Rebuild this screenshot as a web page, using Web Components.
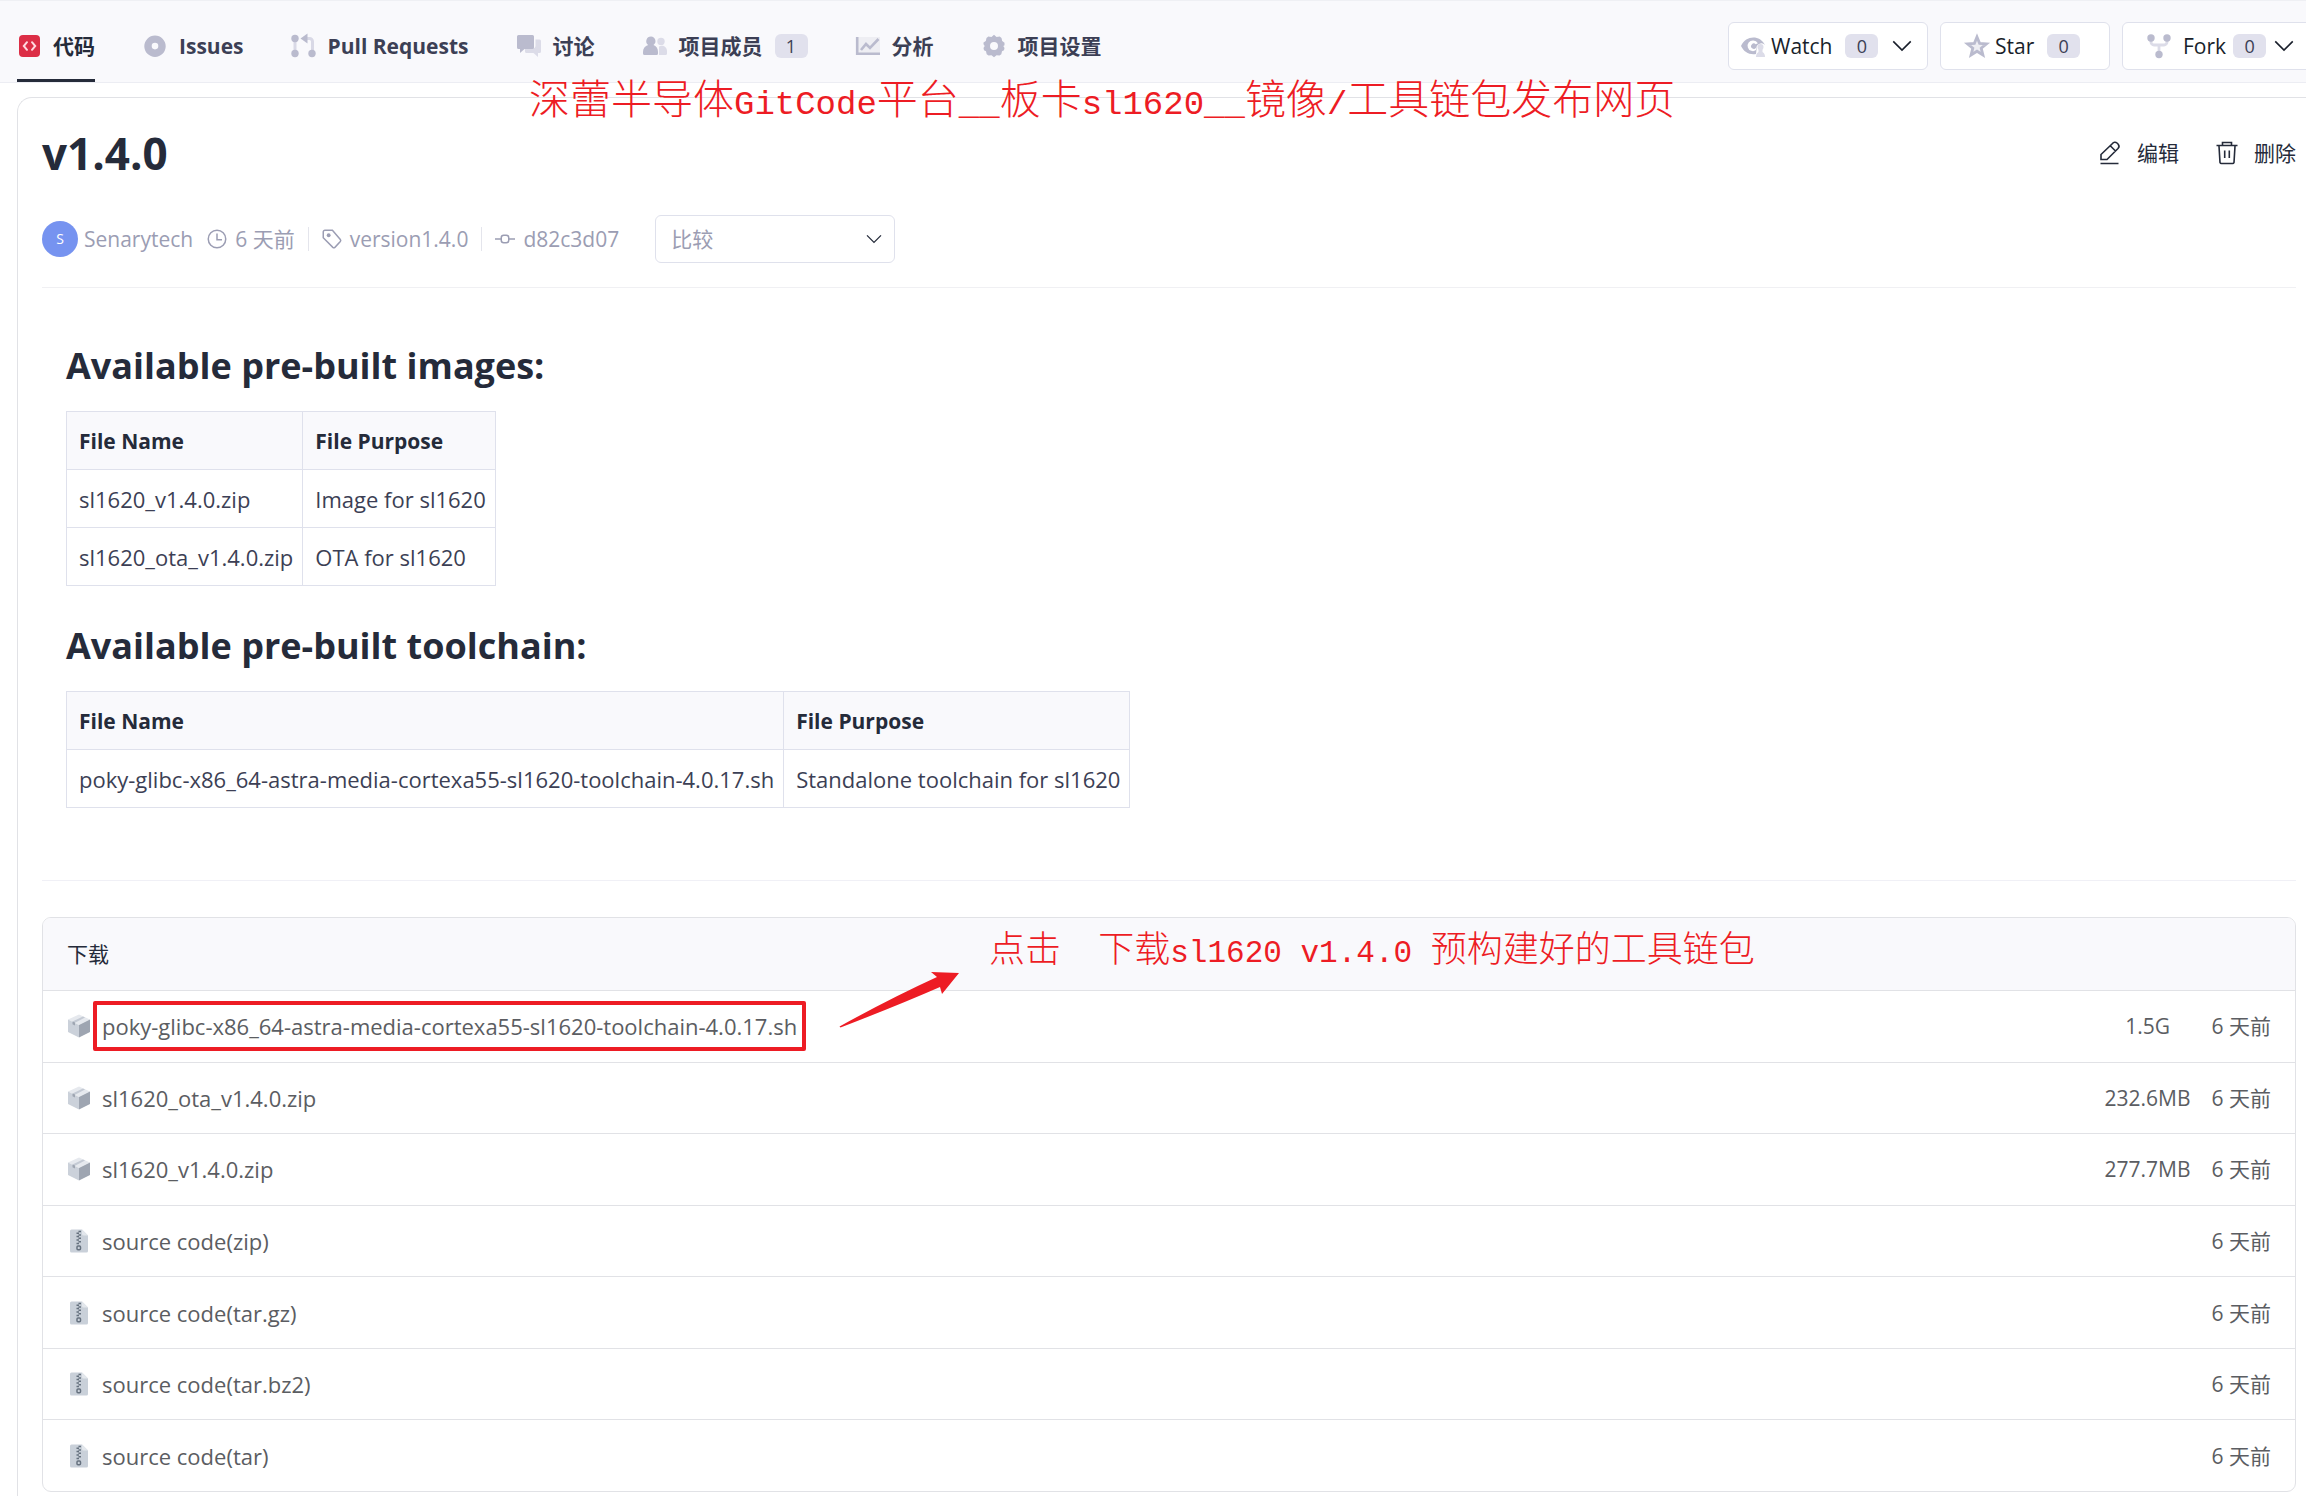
<!DOCTYPE html>
<html lang="zh-CN">
<head>
<meta charset="utf-8">
<title>v1.4.0</title>
<style>
html,body{margin:0;padding:0;background:#fff}
body{font:21px/30px "Open Sans","Noto Sans CJK SC",sans-serif;color:#252b3a;overflow:hidden}
</style>
</head>
<body>
<release-page></release-page>
<script>
const ICONS={
code:'<rect x="2" y="1" width="21" height="22" rx="4" fill="#dc2e46"/><path d="M10 8.200l-3.200 3.800 3.200 3.800M15 8.200l3.200 3.800-3.200 3.800" fill="none" stroke="#ffd9df" stroke-width="2" stroke-linecap="round"/>',
issue:'<path fill-rule="evenodd" d="M12 1.500a10.700 10.700 0 1 0 0 21.400a10.700 10.700 0 1 0 0-21.400zm0 7.300a3.300 3.300 0 1 1 0 6.600a3.300 3.300 0 1 1 0-6.600z" fill="#babbce"/>',
pr:'<path d="M4 4v16M14.500 4.500h4a3 3 0 0 1 3 3V20" fill="none" stroke="#d9d9e6" stroke-width="3"/><path d="M9.500 4.500l7-5v10z" fill="#babbce"/><circle cx="4" cy="4.500" r="3.700" fill="#babbce"/><circle cx="4" cy="19.500" r="3.700" fill="#babbce"/><circle cx="21" cy="19.500" r="3.700" fill="#babbce"/>',
chat:'<path d="M8 14.500h7.500a3 3 0 0 0 3-3V5.500H22.500A1.500 1.500 0 0 1 24 7v10.500a1.500 1.500 0 0 1-1.500 1.500H21v4l-4.500-4H9.500A1.500 1.500 0 0 1 8 17.500z" fill="#dcdce8"/><path d="M1.500 1h14A1.500 1.500 0 0 1 17 2.500v11a1.500 1.500 0 0 1-1.500 1.500H7.500l-4.500 4v-4H1.500A1.500 1.500 0 0 1 0 13.500v-11A1.500 1.500 0 0 1 1.500 1z" fill="#babbce"/>',
people:'<circle cx="18" cy="7.500" r="3.700" fill="#dcdce8"/><path d="M16 21V12.500c5-2 8 1 8 5v2a1.500 1.500 0 0 1-1.500 1.500z" fill="#dcdce8"/><path d="M8 2.500a4.700 4.700 0 0 0-2.800 8.500C2 12 0 14.500 0 18v1.500A1.500 1.500 0 0 0 1.500 21h12a1.500 1.500 0 0 0 1.500-1.500V18c0-3.500-1.700-6-4.500-7A4.700 4.700 0 0 0 8 2.500z" fill="#babbce"/>',
chart:'<path d="M2 3h22v16H2z" fill="#eeeef3"/><path d="M1.200 3v16.700H24" fill="none" stroke="#babbce" stroke-width="2.600"/><path d="M5 16l5-6 4 4L22.500 5" fill="none" stroke="#babbce" stroke-width="2.600"/>',
gear:'<path fill-rule="evenodd" d="M9.500 3L12 .800 14.500 3l3.200-.500 1.800 1.500.700 3 2.300 1.800v2.400L21.300 12l1.200 2-.5 2.200-2 1-.7 3-1.800 1.300-3-.3L12 23.200 9.500 21.200l-3 .3-1.800-1.300-.7-3-2-1L1.500 14l1.200-2-1.200-1.800V8.600L3.800 7l.7-3 1.800-1.500zM12 8a4 4 0 1 0 0 8a4 4 0 1 0 0-8z" fill="#babbce"/>',
watch:'<path fill-rule="evenodd" d="M0 12C5 1 19 1 24 11a5 5 0 0 0-8.500 4.500l-.500 4.500C8 21 3 18 0 12zM12 6.500a5.300 5.300 0 1 0 3 9.600v-2.300a2.700 2.700 0 1 1-.3-3.500l2.200-1A5.300 5.300 0 0 0 12 6.500z" fill="#babbce"/><circle cx="19.500" cy="13" r="3" fill="#dcdce8"/><path d="M15 23c0-2 .5-4 2.500-5v-3h4v3c2 1 2.500 3 2.500 5z" fill="#dcdce8"/>',
star:'<path d="M12 3l2.600 6.300 6.900.500-5.300 4.400 1.700 6.700-5.900-3.700-5.900 3.700 1.700-6.700L2.500 9.800l6.900-.5z" fill="#eeeef3" stroke="#babbce" stroke-width="2.800"/>',
fork:'<path d="M4 4v4a3 3 0 0 0 3 3h10a3 3 0 0 0 3-3V4M12 11v9" fill="none" stroke="#dcdce8" stroke-width="2.800"/><circle cx="4" cy="4" r="3.700" fill="#babbce"/><circle cx="20" cy="4" r="3.700" fill="#babbce"/><circle cx="12" cy="20.500" r="3.700" fill="#babbce"/>',
down:'<path d="M1.500 6.500L12 17 22.500 6.500" fill="none" stroke="currentColor" stroke-width="1.900"/>',
edit:'<path d="M2.500 22.500h18M3 18.500v-5L14.500 2.500a3.200 3.200 0 0 1 4.500-.5l1 1a3.300 3.300 0 0 1 0 4.500L9 18.500zM12.500 5l5 5" fill="none" stroke="#252b3a" stroke-width="1.600"/>',
trash:'<path d="M1.500 4.500h21M7.500 4V1.500h9V4M4 5l1 16.500a1.500 1.500 0 0 0 1.500 1h11a1.500 1.500 0 0 0 1.500-1L20 5M9.700 9.500V17M14.300 9.500V17" fill="none" stroke="#252b3a" stroke-width="1.600"/>',
clock:'<circle cx="12" cy="12" r="10.500" fill="none" stroke="currentColor" stroke-width="1.800"/><path d="M12 5.500V13h6" fill="none" stroke="currentColor" stroke-width="1.800"/>',
tag:'<path d="M1.500 3.500a2 2 0 0 1 2-2h9L22 12.500a2 2 0 0 1 0 2.500l-6.500 7a2 2 0 0 1-2.500 0L1.500 10.500z" fill="none" stroke="currentColor" stroke-width="1.800"/><circle cx="8" cy="7.500" r="2.300" fill="currentColor"/>',
commit:'<rect x="7.500" y="7.500" width="9" height="9" rx="3" fill="none" stroke="currentColor" stroke-width="1.800"/><path d="M0 12h7.500M16.500 12H24" stroke="currentColor" stroke-width="1.800"/>',
box:'<path d="M12 .500L23 5.500 12 11 1 5.500z" fill="#e6e9ee"/><path d="M1 5.500L12 11v12.500L1 18z" fill="#cbd1da"/><path d="M23 5.500L12 11v12.500L23 18z" fill="#9ea5b1"/><path d="M5.500 7.500l10.500-5 2 1L7.500 9z" fill="#c4cad4"/><path d="M5.500 7.500l2.500 1v3l-2.500-1.200z" fill="#9ea5b1"/>',
zip:'<path d="M3 2a1.500 1.500 0 0 1 1.500-1.500H15L21 6.500V22a1.500 1.500 0 0 1-1.500 1.500h-15A1.500 1.500 0 0 1 3 22z" fill="#c9d0d9"/><path d="M15 .500v4.500a1.500 1.500 0 0 0 1.500 1.500H21z" fill="#e3e7ec"/><path d="M11.500 2.500h2.500M9.500 4.200H12M11.500 5.900h2.500M9.500 7.600H12M11.500 9.300h2.500M9.500 11H12M11.500 12.700h2.500M9.500 14.400H12" fill="none" stroke="#66717f" stroke-width="1.500"/><rect x="10" y="17" width="3.500" height="3.800" rx="1" fill="none" stroke="#66717f" stroke-width="1.500"/>'
};
const define=(name,css,html)=>customElements.define(name,class extends HTMLElement{
  connectedCallback(){
    if(this.shadowRoot)return;
    this.attachShadow({mode:'open'}).innerHTML='<style>*{box-sizing:border-box}'+css+'</style>'+(typeof html==='function'?html(this):html);
  }
});
define('ui-icon',':host{display:inline-flex;flex:none;width:24px;height:24px}:host([small]){width:20px;height:20px}svg{width:100%;height:100%;display:block;overflow:visible}',
  e=>`<svg viewBox="0 0 24 24" aria-hidden="true">${ICONS[e.getAttribute('name')]}</svg>`);
define('count-badge',':host{display:block;width:33px;height:24px;border-radius:6px;background:#e1e1ed;color:#3c3f55;font-size:18px;font-weight:400;line-height:24px;text-align:center}','<slot></slot>');
define('nav-tab',':host{display:block}a{display:flex;align-items:center;gap:12px;height:82px;padding-top:12px;color:#3c3f55;font-weight:700;text-decoration:none;border-bottom:3px solid transparent;white-space:nowrap}:host([active]) a{color:#252b3a;border-color:#252b3a}',
  e=>`<a href="#"><ui-icon name="${e.getAttribute('icon')}"></ui-icon><slot></slot></a>`);
define('repo-button',':host{display:block;flex:none}button{display:flex;align-items:center;height:48px;width:100%;padding:0 12px;border:1px solid #dfe1ec;border-radius:6px;background:#fff;color:#191f2b;font:inherit;white-space:nowrap}.label{margin:0 13px 0 6px}:host([wide]) button{padding:0 24px}:host([fork]) button{padding:0 8px 0 24px}:host([fork]) .label{margin:0 7px 0 12px}.chev{margin-left:14px}:host([fork]) .chev{margin-left:8px}',
  e=>`<button type="button"><ui-icon name="${e.getAttribute('icon')}"></ui-icon><span class="label"><slot></slot></span><count-badge>0</count-badge>${e.hasAttribute('menu')?'<ui-icon small class="chev" name="down"></ui-icon>':''}</button>`);
define('repo-nav',':host{display:flex;justify-content:space-between;height:83px;background:#f9f9fc;border-bottom:1px solid #ecedf3;padding-left:17px;overflow:hidden;box-shadow:inset 0 4px 0 -3px #eff0f4}nav{display:flex;gap:48px}.actions{display:flex;gap:12px;padding-top:22px;flex:none;margin-right:-8px}.w{width:200px}.s{width:170px}.f{width:192px}',
`<nav><nav-tab active icon="code">代码</nav-tab><nav-tab icon="issue">Issues</nav-tab><nav-tab icon="pr">Pull Requests</nav-tab><nav-tab icon="chat">讨论</nav-tab><nav-tab icon="people">项目成员<count-badge>1</count-badge></nav-tab><nav-tab icon="chart">分析</nav-tab><nav-tab icon="gear">项目设置</nav-tab></nav>
<div class="actions"><repo-button class="w" icon="watch" menu>Watch</repo-button><repo-button class="s" wide icon="star">Star</repo-button><repo-button class="f" fork icon="fork" menu>Fork</repo-button></div>`);
define('release-head',`:host{display:block;border-bottom:1px solid #f0f0f3;height:190px;padding-top:31px}
.top{display:flex;justify-content:space-between;align-items:center;height:48px}
h1{margin:0;font-size:44px;line-height:48px;font-weight:700}
.acts{display:flex;gap:36px}button{display:flex;align-items:center;gap:15px;padding:0;border:0;background:none;font:inherit;color:#252b3a}
.meta{display:flex;align-items:center;height:48px;margin-top:38px;color:#9b9db3}
.avatar{width:36px;height:36px;border-radius:50%;background:#7693f0;color:#fff;font-size:14px;line-height:36px;text-align:center;margin-right:6px}
.item{display:flex;align-items:center;gap:8px}.time{margin-left:14px}
.bar{width:1px;height:24px;background:#e4e5ec;margin:0 13px}
a{color:inherit;text-decoration:none}
label{position:relative;display:flex;align-items:center;margin-left:36px}
select{appearance:none;width:240px;height:48px;padding:0 15px;border:1px solid #dfe1ec;border-radius:6px;background:#fff;color:#9b9db3;font:inherit}
label ui-icon{position:absolute;right:13px;width:16px;height:16px;color:#252b3a;pointer-events:none}`,
`<div class="top"><h1>v1.4.0</h1><div class="acts"><button type="button"><ui-icon name="edit"></ui-icon>编辑</button><button type="button"><ui-icon name="trash"></ui-icon>删除</button></div></div>
<div class="meta"><div class="avatar">S</div><a href="#">Senarytech</a><span class="item time"><ui-icon small name="clock"></ui-icon><span>6 天前</span></span><i class="bar"></i><a href="#" class="item"><ui-icon small name="tag"></ui-icon>version1.4.0</a><i class="bar"></i><a href="#" class="item"><ui-icon small name="commit"></ui-icon>d82c3d07</a><label><select aria-label="比较"><option>比较</option></select><ui-icon name="down"></ui-icon></label></div>`);
define('file-table',`:host{display:block}table{border-collapse:collapse}th,td{height:58px;padding:0 9px 0 12px;border:1px solid #dfe1ec;text-align:left;white-space:nowrap;color:#3c3f55}td{font-size:22px}th{background:#f9f9fc;color:#252b3a;font-weight:700}`,
  e=>{const r=e.getAttribute('rows').split(';').map(x=>x.split('|'));return `<table><thead><tr><th>File Name</th><th>File Purpose</th></tr></thead><tbody>${r.map(x=>`<tr><td>${x[0]}</td><td>${x[1]}</td></tr>`).join('')}</tbody></table>`});
define('release-notes',`:host{display:block;padding:54px 24px 72px;border-bottom:1px solid #f0f0f6}h2{margin:0 0 21px;font-size:36px;line-height:48px;font-weight:700}h2+file-table+h2{margin-top:36px}`,
`<h2>Available pre-built images:</h2><file-table rows="sl1620_v1.4.0.zip|Image for sl1620;sl1620_ota_v1.4.0.zip|OTA for sl1620"></file-table><h2>Available pre-built toolchain:</h2><file-table rows="poky-glibc-x86_64-astra-media-cortexa55-sl1620-toolchain-4.0.17.sh|Standalone toolchain for sl1620"></file-table>`);
define('asset-row',`:host{display:flex;align-items:center;padding:0 24px;border-top:1px solid #e1e2e6;color:#5b5d62}ui-icon{margin-right:11px}a{color:inherit;text-decoration:none;font-size:22px}.size{margin-left:auto;width:90px;text-align:center}.time{margin-left:19px}:host([marked]) a{position:relative}:host([marked]) a::before{content:"";position:absolute;inset:-10px -9px;border:4px solid #ed1c24;border-radius:2px}`,
  e=>`<ui-icon name="${e.getAttribute('icon')}"></ui-icon><a href="#"><slot></slot></a><span class="size">${e.getAttribute('size')||''}</span><span class="time">6 天前</span>`);
define('red-note',`:host{position:absolute;z-index:2;color:#ed1c24;white-space:pre;font:300 41px/60px "Noto Sans CJK SC",sans-serif;pointer-events:none}b{font:400 34px/60px "Liberation Mono",monospace}:host([small]){font-size:36px}:host([small]) b{font-size:31px}`,
  e=>e.getAttribute('text').replace(/[\x20-\x7e]+/g,'<b>$&</b>'));
define('asset-panel',`:host{display:block;position:relative;margin-top:36px;border:1px solid #e1e2e6;border-radius:9px}
h3{margin:0;height:72px;padding:0 24px;border-radius:8px 8px 0 0;background:#f9f9fc;font-size:21px;line-height:72px;font-weight:400}
.rows{display:grid;grid-auto-rows:1fr;height:501px}
svg{position:absolute;left:796px;top:54px;width:122px;height:58px}
red-note{left:946px;top:-2px}`,
`<h3>下载</h3><div class="rows"><asset-row marked icon="box" size="1.5G">poky-glibc-x86_64-astra-media-cortexa55-sl1620-toolchain-4.0.17.sh</asset-row><asset-row icon="box" size="232.6MB">sl1620_ota_v1.4.0.zip</asset-row><asset-row icon="box" size="277.7MB">sl1620_v1.4.0.zip</asset-row><asset-row icon="zip">source code(zip)</asset-row><asset-row icon="zip">source code(tar.gz)</asset-row><asset-row icon="zip">source code(tar.bz2)</asset-row><asset-row icon="zip">source code(tar)</asset-row></div>
<svg viewBox="0 0 122 58" aria-hidden="true"><path d="M120 1L92 0l6 5Q52 26 .500 54.500l1 1Q60 33 101 15l2 7z" fill="#ed1c24"/></svg><red-note small text="点击  下载sl1620 v1.4.0 预构建好的工具链包"></red-note>`);
define('release-page',`:host{display:block;position:relative}main{margin:14px 0 0 17px;padding:0 10px 4px 24px;border:1px solid #e1e2e6;border-right:0;border-bottom:0;border-radius:15px 0 0 0}.title{left:529px;top:66px}`,
`<repo-nav></repo-nav><main><release-head></release-head><release-notes></release-notes><asset-panel></asset-panel></main><red-note class="title" text="深蕾半导体GitCode平台__板卡sl1620__镜像/工具链包发布网页"></red-note>`);
</script>
</body>
</html>
